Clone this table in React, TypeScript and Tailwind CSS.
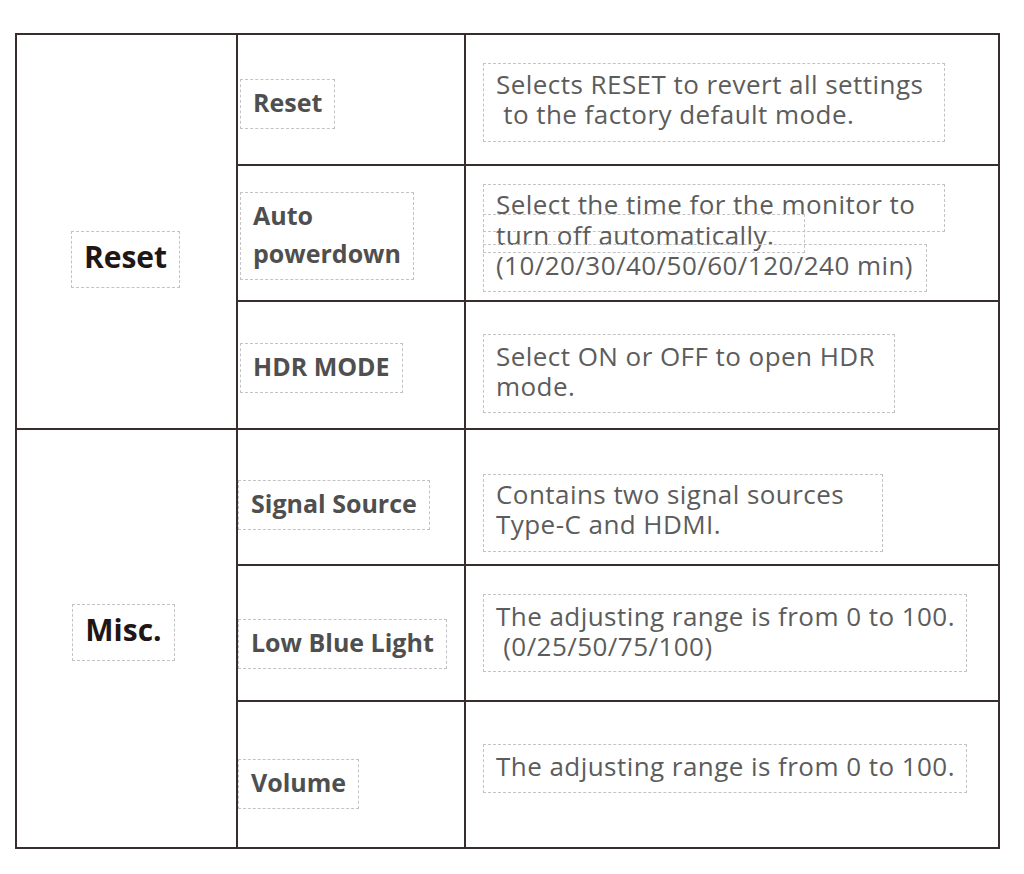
import { Fragment } from "react";

type Row = {
  label: string[];
  labelBox: string;
  descBox: string;
  lines: string[];
};

type Group = {
  name: string;
  nameBox: string;
  cellBorder: string;
  rows: Row[];
};

const GROUPS: Group[] = [
  {
    name: "Reset",
    nameBox: "mt-[196px] ml-[-2px]",
    cellBorder: "border-b-2",
    rows: [
      {
        label: ["Reset"],
        labelBox: "mt-[44px] ml-[2px]",
        descBox: "mt-[28px] w-[462px] h-[79px] pt-[5px]",
        lines: ["Selects RESET to revert all settings", " to the factory default mode."],
      },
      {
        label: ["Auto", "powerdown"],
        labelBox: "mt-[26px] ml-[2px]",
        descBox: "",
        lines: [],
      },
      {
        label: ["HDR MODE"],
        labelBox: "mt-[41px] ml-[2px]",
        descBox: "mt-[32px] w-[412px] h-[79px] pt-[6px]",
        lines: ["Select ON or OFF to open HDR", "mode."],
      },
    ],
  },
  {
    name: "Misc.",
    nameBox: "mt-[174px] ml-[-6px]",
    cellBorder: "",
    rows: [
      {
        label: ["Signal Source"],
        labelBox: "mt-[50px]",
        descBox: "mt-[44px] w-[400px] h-[78px] pt-[4px]",
        lines: ["Contains two signal sources", "Type-C and HDMI."],
      },
      {
        label: ["Low Blue Light"],
        labelBox: "mt-[53px]",
        descBox: "mt-[28px] w-[484px] h-[78px] pt-[6px]",
        lines: ["The adjusting range is from 0 to 100.", " (0/25/50/75/100)"],
      },
      {
        label: ["Volume"],
        labelBox: "mt-[57px]",
        descBox: "mt-[42px] w-[484px] h-[49px] pt-[6px]",
        lines: ["The adjusting range is from 0 to 100."],
      },
    ],
  },
];

const ROW_HEIGHTS = [
  "h-[131px]",
  "h-[136px]",
  "h-[126px]",
  "h-[136px]",
  "h-[136px]",
  "h-[145px]",
];

function AutoPowerdownDesc() {
  // three overlapping text frames, as in the source layout
  return (
    <div className="mt-[18px] flex flex-col">
      <div className="h-[48px] w-[462px] border border-dashed border-[#c3c3c6] pl-[12px] pt-[4px] whitespace-pre">
        Select the time for the monitor to
      </div>
      <div className="-mt-[18px] h-[39px] w-[322px] border border-dashed border-[#c3c3c6] pl-[12px] pt-[5px] whitespace-pre">
        turn off automatically.
      </div>
      <div className="-mt-[9px] h-[48px] w-[444px] border border-dashed border-[#c3c3c6] pl-[12px] pt-[5px] whitespace-pre">
        (10/20/30/40/50/60/120/240 min)
      </div>
    </div>
  );
}

export default function App() {
  let rowIndex = 0;

  return (
    <div className="min-h-[874px] w-[1024px] bg-white pt-[33px] pl-[15px] font-['Open_Sans',sans-serif]">
      <div className="w-[985px] border-2 border-[#372d2d]">
        {GROUPS.map((group, gi) => (
          <div key={group.name} className={`flex ${group.cellBorder} border-[#372d2d]`}>
            <div className="flex w-[221px] shrink-0 justify-center border-r-2 border-[#372d2d]">
              <div
                className={`${group.nameBox} self-start border border-dashed border-[#c3c3c6] px-[12px] pt-[2px] pb-[8px] text-[30px] font-bold leading-[45px] text-[#1f1616]`}
              >
                {group.name}
              </div>
            </div>
            <div className="flex flex-1 flex-col">
              {group.rows.map((row, ri) => {
                const h = ROW_HEIGHTS[rowIndex++];
                const last = ri === group.rows.length - 1;
                return (
                  <div
                    key={row.label.join(" ")}
                    className={`flex ${h} ${last ? "" : "border-b-2"} border-[#372d2d]`}
                  >
                    <div className="w-[228px] shrink-0 border-r-2 border-[#372d2d]">
                      <div
                        className={`${row.labelBox} inline-block border border-dashed border-[#c3c3c6] px-[12px] pt-[3px] pb-[7px] text-[25px] font-bold leading-[38px] text-[#4f4f4f]`}
                      >
                        {row.label.map((l, i) => (
                          <Fragment key={l}>
                            {i > 0 && <br />}
                            {l}
                          </Fragment>
                        ))}
                      </div>
                    </div>
                    <div className="flex-1 pl-[17px] text-[26px] leading-[30px] tracking-[0.45px] text-[#5c5c5c]">
                      {gi === 0 && ri === 1 ? (
                        <AutoPowerdownDesc />
                      ) : (
                        <div
                          className={`${row.descBox} border border-dashed border-[#c3c3c6] pl-[12px] whitespace-pre`}
                        >
                          {row.lines.map((l, i) => (
                            <div key={i}>{l}</div>
                          ))}
                        </div>
                      )}
                    </div>
                  </div>
                );
              })}
            </div>
          </div>
        ))}
      </div>
    </div>
  );
}
